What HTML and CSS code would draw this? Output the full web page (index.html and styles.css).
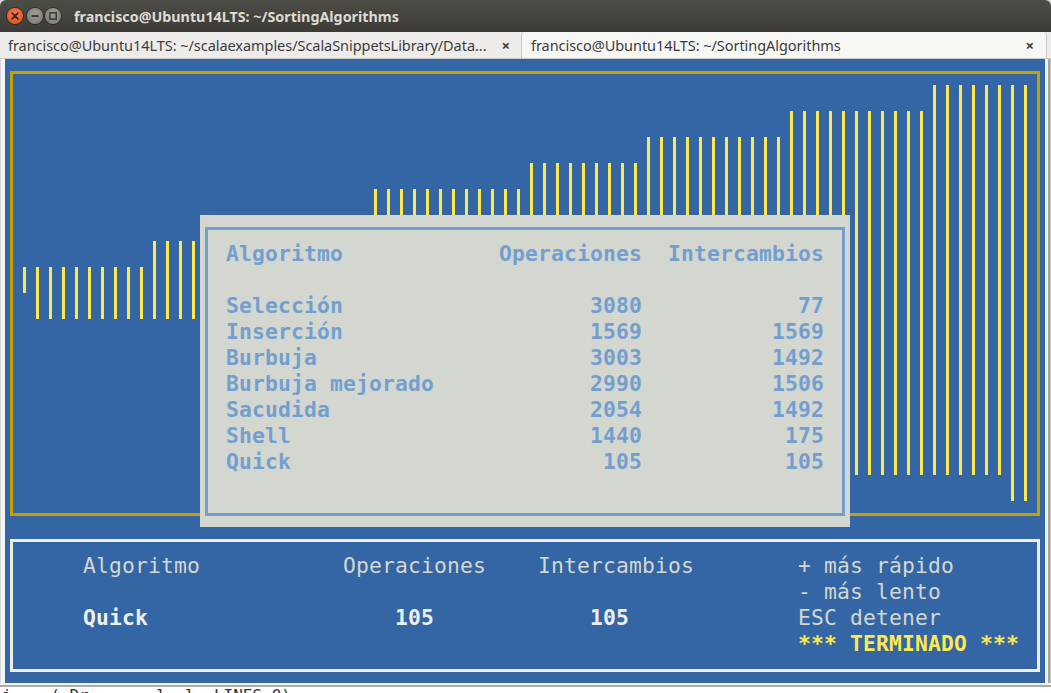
FILE: index.html
```html
<!DOCTYPE html>
<html lang="es">
<head>
<meta charset="utf-8">
<title>francisco@Ubuntu14LTS: ~/SortingAlgorithms</title>
<link rel="stylesheet" href="styles.css">
</head>
<body>
<div class="window">
  <div class="titlebar">
    <div class="wbtns">
      <span class="wb close"><svg width="16" height="16" viewBox="0 0 16 16"><path d="M5.2 5.2 L10.8 10.8 M10.8 5.2 L5.2 10.8" stroke="#3a2a22" stroke-width="1.8" stroke-linecap="round"/></svg></span>
      <span class="wb"><svg width="16" height="16" viewBox="0 0 16 16"><path d="M4.5 8 H11.5" stroke="#3c3b37" stroke-width="1.8"/></svg></span>
      <span class="wb"><svg width="16" height="16" viewBox="0 0 16 16"><rect x="4.8" y="4.8" width="6.4" height="6.4" fill="none" stroke="#3c3b37" stroke-width="1.5"/></svg></span>
    </div>
    <div class="title">francisco@Ubuntu14LTS: ~/SortingAlgorithms</div>
  </div>
  <div class="tabs">
    <div class="tab">
      <span class="tab-label">francisco@Ubuntu14LTS: ~/scalaexamples/ScalaSnippetsLibrary/Data...</span>
      <span class="tab-x">×</span>
    </div>
    <div class="tab active">
      <span class="tab-label">francisco@Ubuntu14LTS: ~/SortingAlgorithms</span>
      <span class="tab-x">×</span>
    </div>
  </div>
  <div class="termrow">
    <div class="term">
      <div class="chart">
        <div class="bars">
          <i class="bar a"></i>
          <i class="bar b"></i><i class="bar b"></i><i class="bar b"></i><i class="bar b"></i><i class="bar b"></i><i class="bar b"></i><i class="bar b"></i><i class="bar b"></i><i class="bar b"></i>
          <i class="bar c"></i><i class="bar c"></i><i class="bar c"></i><i class="bar c"></i><i class="bar c"></i><i class="bar c"></i><i class="bar c"></i><i class="bar c"></i><i class="bar c"></i><i class="bar c"></i><i class="bar c"></i><i class="bar c"></i><i class="bar c"></i><i class="bar c"></i><i class="bar c"></i><i class="bar c"></i><i class="bar c"></i>
          <i class="bar d"></i><i class="bar d"></i><i class="bar d"></i><i class="bar d"></i><i class="bar d"></i><i class="bar d"></i><i class="bar d"></i><i class="bar d"></i><i class="bar d"></i><i class="bar d"></i><i class="bar d"></i><i class="bar d"></i>
          <i class="bar e"></i><i class="bar e"></i><i class="bar e"></i><i class="bar e"></i><i class="bar e"></i><i class="bar e"></i><i class="bar e"></i><i class="bar e"></i><i class="bar e"></i>
          <i class="bar f"></i><i class="bar f"></i><i class="bar f"></i><i class="bar f"></i><i class="bar f"></i><i class="bar f"></i><i class="bar f"></i><i class="bar f"></i><i class="bar f"></i><i class="bar f"></i><i class="bar f"></i>
          <i class="bar g"></i><i class="bar g"></i><i class="bar g"></i><i class="bar g"></i><i class="bar g"></i><i class="bar g"></i><i class="bar g"></i><i class="bar g"></i><i class="bar g"></i><i class="bar g"></i><i class="bar g"></i>
          <i class="bar h"></i><i class="bar h"></i><i class="bar h"></i><i class="bar h"></i><i class="bar h"></i><i class="bar h"></i>
          <i class="bar k"></i><i class="bar k"></i>
        </div>
      </div>

      <div class="dialog">
        <div class="dframe">
          <div class="dgrid dhead">
            <span>Algoritmo</span><span class="num">Operaciones</span><span class="num">Intercambios</span>
          </div>
          <div class="dgrid drows">
            <span>Selección</span><span class="num">3080</span><span class="num">77</span>
            <span>Inserción</span><span class="num">1569</span><span class="num">1569</span>
            <span>Burbuja</span><span class="num">3003</span><span class="num">1492</span>
            <span>Burbuja mejorado</span><span class="num">2990</span><span class="num">1506</span>
            <span>Sacudida</span><span class="num">2054</span><span class="num">1492</span>
            <span>Shell</span><span class="num">1440</span><span class="num">175</span>
            <span>Quick</span><span class="num">105</span><span class="num">105</span>
          </div>
        </div>
      </div>

      <div class="status">
        <div class="sgrid">
          <span>Algoritmo</span><span>Operaciones</span><span>Intercambios</span><span>+ más rápido</span>
          <span></span><span></span><span></span><span>- más lento</span>
          <span class="bold">Quick</span><span class="bold val">105</span><span class="bold val">105</span><span>ESC detener</span>
          <span></span><span></span><span></span><span class="done">*** TERMINADO ***</span>
        </div>
      </div>
    </div>
    <div class="edge"></div>
  </div>
  <div class="bottom"><span class="peek">i&nbsp;&nbsp;&nbsp;&nbsp;( Dr&nbsp;&nbsp;&nbsp;&nbsp;&nbsp;&nbsp;&nbsp;l&nbsp;&nbsp;l&nbsp;&nbsp;LINES 0)</span></div>
</div>
</body>
</html>
```

FILE: styles.css
```css
* { box-sizing: border-box; }
html, body { margin: 0; padding: 0; }
body {
  width: 1051px;
  height: 693px;
  overflow: hidden;
  background: #d8d8d8;
}
.window {
  width: 1051px;
  height: 693px;
  display: flex;
  flex-direction: column;
  border-radius: 6px 6px 0 0;
  overflow: hidden;
  background: #f2f1f0;
}
.titlebar {
  height: 32px;
  flex: none;
  display: flex;
  align-items: center;
  background: linear-gradient(#4d4c47, #3c3b37);
  padding-left: 7px;
}
.wbtns { display: flex; gap: 2px; }
.wb {
  width: 16px;
  height: 16px;
  border-radius: 50%;
  background: radial-gradient(circle at 50% 35%, #9c9a93, #7a7871);
  box-shadow: 0 0 0 1px rgba(0,0,0,0.35);
  display: flex;
}
.wb.close { background: radial-gradient(circle at 50% 35%, #f77a4a, #df4a16); }
.wbtns .wb:nth-child(2) { margin-left: 2px; }
.title {
  margin-left: 13px;
  font-family: "Noto Sans", "Open Sans", sans-serif;
  font-weight: 700;
  font-size: 14.3px;
  color: #dfdbd2;
}
.tabs {
  height: 27px;
  flex: none;
  display: flex;
  background: #edeceb;
  border-bottom: 1px solid #c9c7c4;
}
.tab {
  width: 521px;
  display: flex;
  align-items: center;
  justify-content: space-between;
  padding: 0 11px 0 8px;
  font-family: "Noto Sans", "Open Sans", sans-serif;
  font-size: 14.5px;
  letter-spacing: -0.05px;
  color: #3c3c3c;
}
.tab.active {
  width: 526px;
  background: #f7f7f6;
  border-left: 1px solid #c9c7c4;
  border-right: 1px solid #c9c7c4;
  border-radius: 3px 3px 0 0;
  padding-left: 9px;
  padding-right: 12px;
}
.tab-x { font-size: 15px; font-weight: 700; color: #3c3c3c; }
.termrow {
  flex: none;
  height: 624px;
  display: flex;
  padding-left: 4px;
  background: #f5f5f5;
  border-left: 1px solid #d6d6d6;
}
.term {
  position: relative;
  width: 1040px;
  height: 624px;
  background: #3465a4;
  padding: 12px 5px 0 5px;
  font-family: "DejaVu Sans Mono", monospace;
  font-size: 21.33px;
  letter-spacing: 0.16px;
  line-height: 26px;
}
.edge {
  width: 7px;
  background: linear-gradient(90deg, #f2f2f2 0 3px, #a3a3a3 3px 5px, #c8c8c8 5px);
}
.chart {
  width: 1030px;
  height: 445px;
  border: 3px solid #c4a000;
}
.bars {
  display: flex;
  align-items: flex-start;
  gap: 10px;
  padding-left: 10px;
}
.bar { display: block; width: 3px; background: #fce94f; flex: none; }
.bar.a { margin-top: 193px; height: 26px; }
.bar.b { margin-top: 193px; height: 52px; }
.bar.c { margin-top: 167px; height: 78px; }
.bar.d { margin-top: 115px; height: 208px; }
.bar.e { margin-top: 89px; height: 260px; }
.bar.f { margin-top: 63px; height: 312px; }
.bar.g { margin-top: 37px; height: 364px; }
.bar.h { margin-top: 11px; height: 390px; }
.bar.k { margin-top: 11px; height: 416px; }

.dialog {
  position: absolute;
  left: 195px;
  top: 156px;
  width: 650px;
  height: 312px;
  background: #d3d7cf;
  padding: 12px 5px 11px 5px;
}
.dframe {
  height: 289px;
  border: 3px solid #729fcf;
  padding: 11px 0 0 18px;
  color: #729fcf;
  font-weight: 700;
}
.dgrid {
  display: grid;
  grid-template-columns: 273px 143px 182px;
  white-space: pre;
}
.drows { margin-top: 26px; }
.num { text-align: right; }

.status {
  margin-top: 23px;
  width: 1030px;
  height: 133px;
  border: 3px solid #eeeeec;
  padding: 11px 0 0 70px;
  color: #d3d7cf;
}
.sgrid {
  display: grid;
  grid-template-columns: 260px 195px 260px auto;
  white-space: pre;
}
.bold { font-weight: 700; color: #eeeeec; }
.val { padding-left: 52px; }
.done { font-weight: 700; color: #fce94f; }

.bottom {
  flex: 1;
  border-top: 2px solid #f4f4f4;
  background: #fff;
  box-shadow: inset 0 2px 0 #a8a8a8;
  overflow: hidden;
  padding-left: 2px;
}
.peek {
  display: block;
  margin-top: 3px;
  font-family: "DejaVu Sans Mono", monospace;
  font-size: 16px;
  line-height: 16px;
  color: #333;
}
```
